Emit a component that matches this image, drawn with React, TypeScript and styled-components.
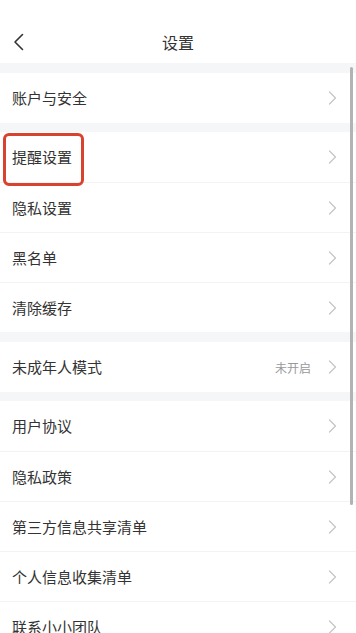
import React from 'react';
import styled, { createGlobalStyle } from 'styled-components';

const GlobalStyle = createGlobalStyle`
  html, body {
    margin: 0;
    padding: 0;
    background: #ffffff;
    overflow: hidden;
  }
  body {
    font-family: "Noto Sans CJK SC", "Noto Sans", sans-serif;
    color: #333333;
  }
`;

type Item = { label: string; value?: string; highlight?: boolean };

const groups: { gap: number; items: Item[] }[] = [
  { gap: 10, items: [{ label: '账户与安全' }] },
  {
    gap: 9,
    items: [
      { label: '提醒设置', highlight: true },
      { label: '隐私设置' },
      { label: '黑名单' },
      { label: '清除缓存' },
    ],
  },
  { gap: 10, items: [{ label: '未成年人模式', value: '未开启' }] },
  {
    gap: 9,
    items: [
      { label: '用户协议' },
      { label: '隐私政策' },
      { label: '第三方信息共享清单' },
      { label: '个人信息收集清单' },
      { label: '联系小小团队' },
    ],
  },
];

const BackIcon = () => (
  <svg width="12" height="18" viewBox="0 0 12 18" fill="none">
    <path d="M9.5 1.5 L2 9 L9.5 16.5" stroke="#333" strokeWidth="1.6" strokeLinecap="round" strokeLinejoin="round" />
  </svg>
);

const Chevron = () => (
  <svg width="9" height="14" viewBox="0 0 9 14" fill="none">
    <path d="M1.5 1 L7.5 7 L1.5 13" stroke="#c4c4c4" strokeWidth="1.2" strokeLinecap="round" strokeLinejoin="round" />
  </svg>
);

const Settings: React.FC = () => {
  return (
    <Page>
      <GlobalStyle />
      <Header>
        <BackButton>
          <BackIcon />
        </BackButton>
        <Title>设置</Title>
      </Header>
      <List>
        {groups.map((group, gi) => (
          <React.Fragment key={gi}>
            <Gap $size={group.gap} />
            {group.items.map((item, i) => (
              <Row key={item.label} $divider={i > 0}>
                <Label>
                  {item.label}
                  {item.highlight && <Highlight />}
                </Label>
                <Right>
                  {item.value && <Value>{item.value}</Value>}
                  <Chevron />
                </Right>
              </Row>
            ))}
          </React.Fragment>
        ))}
      </List>
      <ScrollThumb />
    </Page>
  );
};

const Page = styled.div`
  position: relative;
  width: 356px;
  height: 633px;
  overflow: hidden;
  background: #ffffff;
`;

const Header = styled.div`
  height: 63px;
  padding-top: 20px;
  box-sizing: border-box;
  display: flex;
  align-items: center;
  justify-content: center;
  position: relative;
`;

const BackButton = styled.div`
  position: absolute;
  left: 13px;
  top: 33px;
  display: flex;
`;

const Title = styled.h1`
  margin: 0;
  font-size: 16px;
  font-weight: 400;
  color: #333333;
  line-height: 22px;
`;

const List = styled.div`
  display: flex;
  flex-direction: column;
`;

const Gap = styled.div<{ $size: number }>`
  height: ${(p) => p.$size}px;
  background: #f5f6f8;
`;

const Row = styled.div<{ $divider: boolean }>`
  height: 50px;
  box-sizing: border-box;
  padding: 0 19px 0 12px;
  display: flex;
  align-items: center;
  justify-content: space-between;
  border-top: ${(p) => (p.$divider ? '1px solid #f3f3f3' : 'none')};
`;

const Label = styled.span`
  position: relative;
  font-size: 15px;
  color: #333333;
  line-height: 20px;
`;

const Highlight = styled.span`
  position: absolute;
  left: -9px;
  top: -14px;
  width: 81px;
  height: 53px;
  box-sizing: border-box;
  border: 3px solid #d8432f;
  border-radius: 6px;
`;

const Right = styled.div`
  display: flex;
  align-items: center;
  gap: 17px;
`;

const Value = styled.span`
  font-size: 12px;
  color: #999999;
`;

const ScrollThumb = styled.div`
  position: absolute;
  right: 3px;
  top: 67px;
  width: 3px;
  height: 438px;
  border-radius: 2px;
  background: #b3b3b3;
`;

export default Settings;
